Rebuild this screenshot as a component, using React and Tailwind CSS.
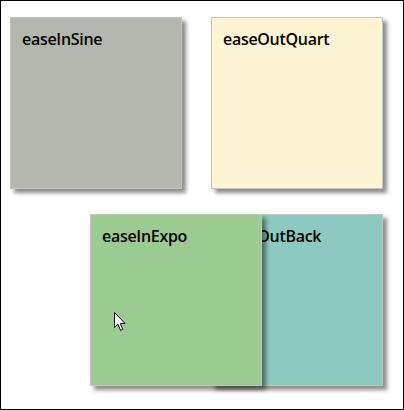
import React from "react";

const Box = ({ label, className = "" }) => (
  <div
    className={`w-[172px] h-[172px] border border-[#c4c4c0] px-[11px] pt-[9px] shadow-[4px_4px_4px_rgba(0,0,0,0.45)] ${className}`}
  >
    <span className="text-[16px] font-semibold text-black leading-5 tracking-[-0.3px]">
      {label}
    </span>
  </div>
);

const Cursor = () => (
  <svg width="13" height="20" viewBox="0 0 13 20" className="absolute left-[24px] top-[98px]">
    <path
      d="M0.5 0.5 L0.5 15.5 L4 12.2 L6.6 18.4 L8.8 17.4 L6.3 11.4 L11 11.4 Z"
      fill="#fff"
      stroke="#000"
      strokeWidth="1"
      strokeLinejoin="round"
    />
  </svg>
);

export default function App() {
  return (
    <div
      className="w-[404px] h-[410px] border border-black bg-white pl-[9px] pt-[16px]"
      style={{ fontFamily: '"Open Sans", "Noto Sans", sans-serif' }}
    >
      <div className="grid grid-cols-[172px_172px] gap-x-[29px] gap-y-[25px]">
        <Box label="easeInSine" className="bg-[#b4b7ad]" />
        <Box label="easeOutQuart" className="bg-[#fef5d4]" />
        <div className="relative z-10 col-start-1 row-start-2 translate-x-[80px]">
          <Box label="easeInExpo" className="bg-[#9ccb92]" />
          <Cursor />
        </div>
        <Box label="easeOutBack" className="col-start-2 row-start-2 bg-[#8dc8c1]" />
      </div>
    </div>
  );
}
